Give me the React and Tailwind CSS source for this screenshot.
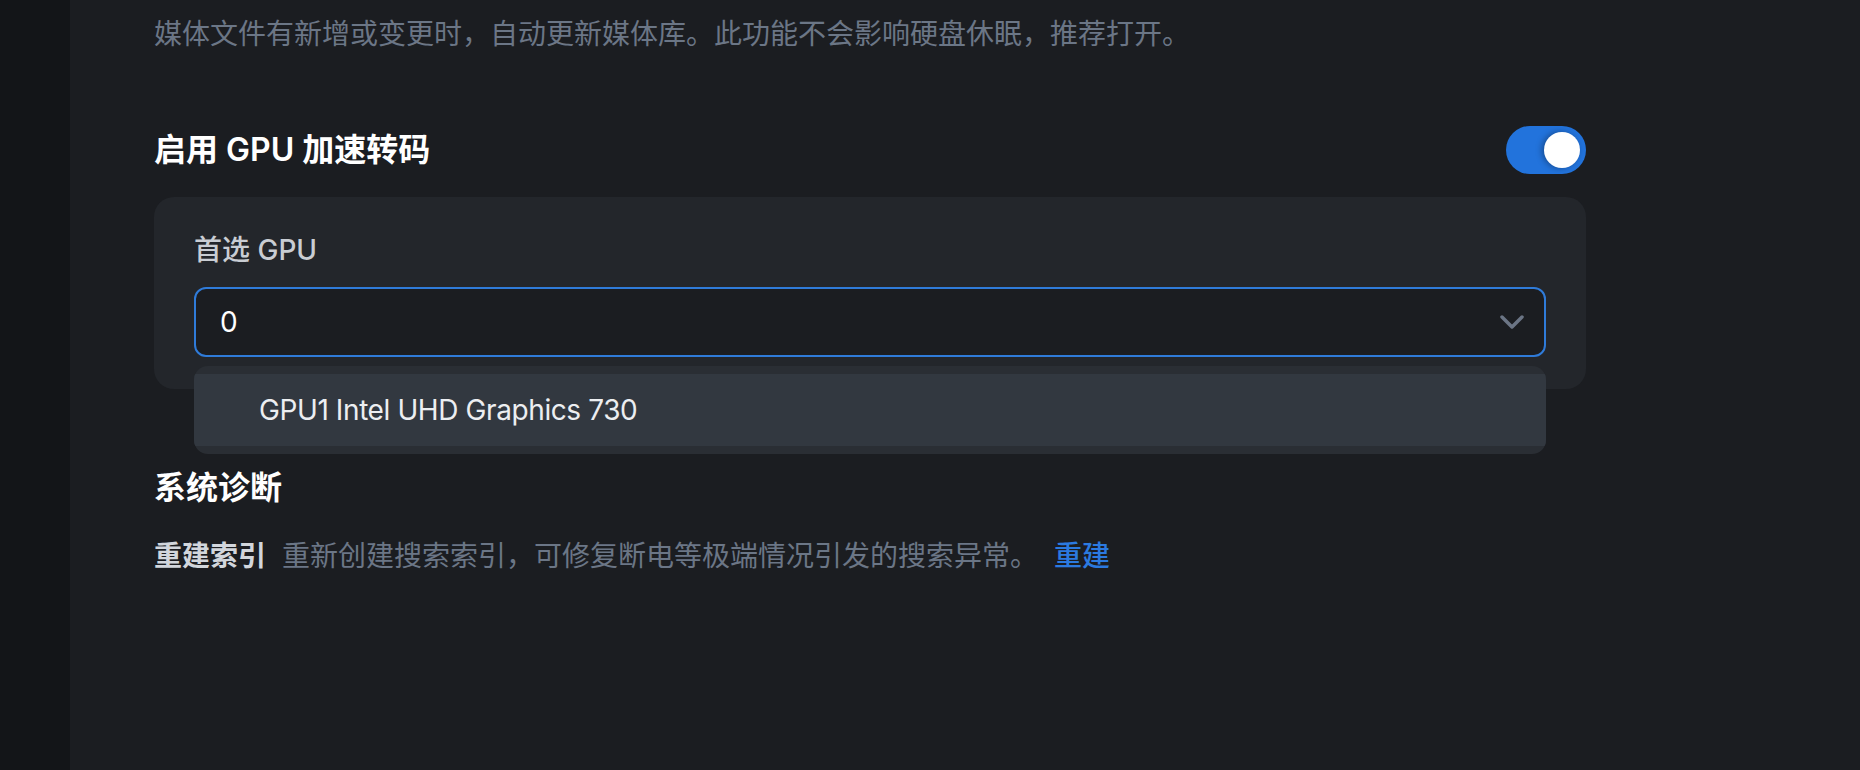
import React, { useState } from 'react';

const font = { fontFamily: 'Inter, "Noto Sans CJK SC", sans-serif' };

function Toggle({ on, onChange }) {
    return (
        <button
            onClick={() => onChange(!on)}
            className={`relative w-[80px] h-[48px] rounded-full shrink-0 ${on ? 'bg-[#2273dc]' : 'bg-[#3a3f47]'}`}
        >
            <span
                className={`absolute top-[6px] w-[36px] h-[36px] rounded-full bg-white shadow-[-2px_0_6px_rgba(0,0,0,0.35)] ${on ? 'right-[6px]' : 'left-[6px]'}`}
            />
        </button>
    );
}

export default function App() {
    const [gpuOn, setGpuOn] = useState(true);

    return (
        <div className="flex w-[1860px] h-[770px] bg-[#1b1d21] overflow-hidden" style={font}>
            <div className="w-[70px] h-full bg-[#131518] shrink-0" />

            <div className="ml-[84px] w-[1432px] pt-[14px]">
                <p className="text-[28px] leading-[40px] text-[#6b7686]">
                    媒体文件有新增或变更时，自动更新媒体库。此功能不会影响硬盘休眠，推荐打开。
                </p>

                <div className="mt-[72px] flex items-center justify-between h-[48px]">
                    <h3 className="text-[32px] leading-[48px] font-semibold text-white">启用 GPU 加速转码</h3>
                    <Toggle on={gpuOn} onChange={setGpuOn} />
                </div>

                <div className="mt-[23px] bg-[#23262b] rounded-[20px] px-[40px] pt-[33px] pb-[32px]">
                    <label className="block text-[28px] leading-[40px] font-medium text-[#c9cdd3]">首选 GPU</label>

                    <div className="relative mt-[17px]">
                        <div className="h-[70px] flex items-center justify-between pl-[24px] pr-[20px] bg-[#1b1d21] border-2 border-[#2f7bd9] rounded-[12px]">
                            <span className="text-[28px] text-white">0</span>
                            <svg width="24" height="14" viewBox="0 0 24 14" fill="none">
                                <path d="M2 2l10 10L22 2" stroke="#6b7585" strokeWidth="3.5" strokeLinecap="round" strokeLinejoin="round" />
                            </svg>
                        </div>

                        <div className="absolute left-0 right-0 top-[79px] py-[8px] bg-[#2a2e34] rounded-[14px] overflow-hidden z-10">
                            <div className="h-[72px] flex items-center pl-[65px] bg-[#323840] text-[28px] tracking-[-0.4px] text-[#eceef1]">
                                GPU1 Intel UHD Graphics 730
                            </div>
                        </div>
                    </div>
                </div>

                <h3 className="mt-[75px] text-[32px] leading-[48px] font-semibold text-white">系统诊断</h3>

                <div className="mt-[24px] flex items-center text-[28px] leading-[40px]">
                    <span className="font-semibold text-[#d2d6dc]">重建索引</span>
                    <span className="ml-[16px] text-[#6b7686]">重新创建搜索索引，可修复断电等极端情况引发的搜索异常。</span>
                    <button className="ml-[16px] font-medium text-[#2b7ae0]">重建</button>
                </div>
            </div>
        </div>
    );
}
